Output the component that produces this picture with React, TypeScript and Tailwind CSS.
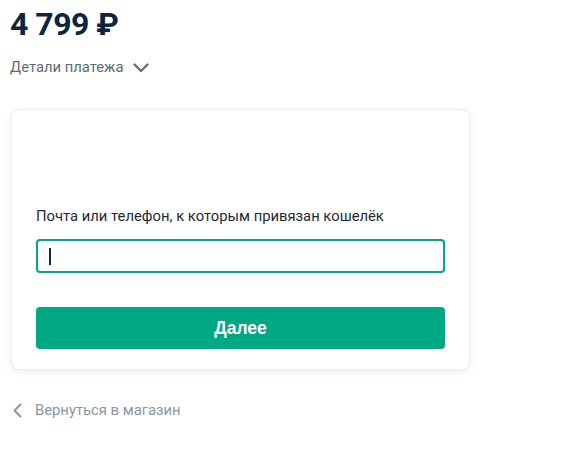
export default function App() {
  return (
    <div className="min-h-[472px] bg-white px-[10px] pt-[5px] font-['Roboto',sans-serif]">
      {/* Amount */}
      <div className="text-[32px] leading-[38px] font-bold tracking-[-0.5px] text-[#0d2540]">
        4 799 ₽
      </div>

      {/* Payment details toggle */}
      <button className="mt-[14px] flex items-center gap-[9px] text-[14.8px] leading-[20px] text-[#5d6a78]">
        Детали платежа
        <svg width="16" height="10" viewBox="0 0 16 10" fill="none" className="mt-[1px]">
          <path d="M1.5 1.5 8 8l6.5-6.5" stroke="#5d6a78" strokeWidth="2.2" strokeLinecap="round" strokeLinejoin="round" />
        </svg>
      </button>

      {/* Card */}
      <div className="mt-[32px] w-[459px] ml-[1px] rounded-[8px] border border-[#eceef1] bg-white px-[24px] pt-[96px] pb-[20px] shadow-[0_2px_8px_rgba(30,40,60,0.08)]">
        <label className="block text-[14.8px] leading-[20px] text-[#1d2a38]">
          Почта или телефон, к которым привязан кошелёк
        </label>
        <div className="mt-[13px] flex h-[34px] items-center rounded-[4px] border-2 border-[#00a884] px-[11px]">
          <span className="block h-[17px] w-[2px] bg-[#0d2540]" />
        </div>
        <button className="mt-[34px] flex h-[42px] w-full items-center justify-center rounded-[4px] bg-[#00a884] text-[17.5px] font-bold text-white font-['Liberation_Sans',sans-serif]">
          Далее
        </button>
      </div>

      {/* Back link */}
      <button className="mt-[30px] ml-[3px] flex items-center gap-[13px] text-[14.8px] leading-[20px] text-[#8b96a2]">
        <svg width="9" height="15" viewBox="0 0 9 15" fill="none">
          <path d="M7.5 1.5 1.5 7.5l6 6" stroke="#8b96a2" strokeWidth="2" strokeLinecap="round" strokeLinejoin="round" />
        </svg>
        Вернуться в магазин
      </button>
    </div>
  )
}
